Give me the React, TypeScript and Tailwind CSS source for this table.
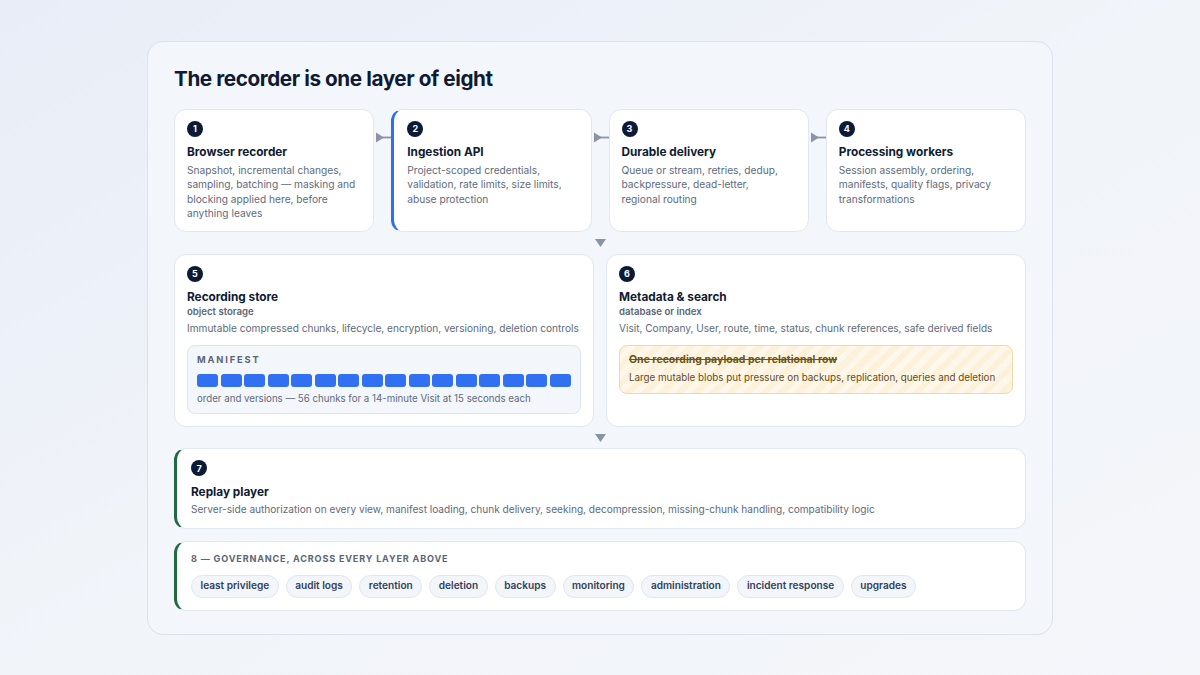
import React from "react";

const FLOW = [
  { n: 1, title: "Browser recorder", body: "Snapshot, incremental changes, sampling, batching — masking and blocking applied here, before anything leaves", accent: false, pr: "pr-[12px]" },
  { n: 2, title: "Ingestion API", body: "Project-scoped credentials, validation, rate limits, size limits, abuse protection", accent: true, pr: "pr-[16px]" },
  { n: 3, title: "Durable delivery", body: "Queue or stream, retries, dedup, backpressure, dead-letter, regional routing", accent: false, pr: "pr-[22px]" },
  { n: 4, title: "Processing workers", body: "Session assembly, ordering, manifests, quality flags, privacy transformations", accent: false, pr: "pr-[16px]" },
];

const CHIPS = [
  "least privilege",
  "audit logs",
  "retention",
  "deletion",
  "backups",
  "monitoring",
  "administration",
  "incident response",
  "upgrades",
];

function Badge({ n }: { n: number }) {
  return (
    <div className="w-4 h-4 rounded-full bg-[#0b1a36] text-white text-[9px] font-bold flex items-center justify-center leading-none">
      {n}
    </div>
  );
}

function RightArrow() {
  return (
    <div className="pt-[23px] flex justify-start pl-[2px]">
      <svg width="15" height="11" viewBox="0 0 15 11">
        <polygon points="0,0.5 8,5.5 0,10.5" fill="#8b94a6" />
        <rect x="6" y="4.6" width="9" height="1.8" fill="#8b94a6" />
      </svg>
    </div>
  );
}

function DownArrow({ h }: { h: string }) {
  return (
    <div className={`${h} flex items-center justify-center`}>
      <svg width="11" height="8" viewBox="0 0 11 8">
        <polygon points="0,0 11,0 5.5,8" fill="#8b94a6" />
      </svg>
    </div>
  );
}

export default function App() {
  return (
    <div
      className="w-[1200px] h-[675px] flex items-center justify-center bg-linear-to-br from-[#e8edf7] via-[#f1f4f9] to-[#f4f6fa]"
      style={{ fontFamily: "Inter, 'Noto Sans', sans-serif" }}
    >
      <div className="w-[906px] rounded-[16px] border border-[#dbe2ec] bg-[#f3f6fb] px-[26px] pt-[23px] pb-[23px]">
        <h1 className="text-[20.7px] leading-[28px] font-bold tracking-[-0.02em] text-[#0f1b33] mb-[16px]">
          The recorder is one layer of eight
        </h1>

        {/* Row 1 — pipeline */}
        <div className="grid grid-cols-[1fr_17px_1fr_17px_1fr_17px_1fr]">
          {FLOW.map((c, i) => (
            <React.Fragment key={c.n}>
              {i > 0 && <RightArrow />}
              <div
                className={`min-w-0 min-h-[123px] rounded-[12px] bg-white border border-[#e1e7f0] pt-[11px] pb-[10px] ${c.pr} ${
                  c.accent ? "border-l-[3px] border-l-[#2f6ef0] pl-[13px]" : "pl-[12px]"
                }`}
              >
                <Badge n={c.n} />
                <div className="mt-[7px] text-[11.8px] leading-[16px] font-bold text-[#0f1b33]">{c.title}</div>
                <p className="mt-[3px] text-[10.2px] leading-[14.5px] text-[#5e6a7d]">{c.body}</p>
              </div>
            </React.Fragment>
          ))}
        </div>

        <DownArrow h="h-[22px]" />

        {/* Row 2 — storage */}
        <div className="grid grid-cols-2 gap-3">
          <div className="rounded-[12px] bg-white border border-[#e1e7f0] px-[12px] pt-[11px] pb-[12px]">
            <Badge n={5} />
            <div className="mt-[7px] text-[11.8px] leading-[16px] font-bold text-[#0f1b33]">Recording store</div>
            <div className="text-[9.6px] leading-[13px] font-semibold text-[#5b6577]">object storage</div>
            <p className="mt-[3px] text-[10.1px] leading-[14.5px] text-[#5e6a7d]">
              Immutable compressed chunks, lifecycle, encryption, versioning, deletion controls
            </p>
            <div className="mt-[10px] rounded-[8px] border border-[#dde4ee] bg-[#f3f6fb] px-[9px] pt-[8px] pb-[8px]">
              <div className="text-[9.3px] leading-[12px] font-bold tracking-[0.2em] text-[#5b6577]">MANIFEST</div>
              <div className="mt-[8px] flex gap-[2.5px]">
                {Array.from({ length: 16 }).map((_, i) => (
                  <div key={i} className="flex-1 h-[13px] rounded-[3px] bg-[#3170f0]" />
                ))}
              </div>
              <div className="mt-[5px] text-[9.7px] leading-[13px] text-[#5e6a7d]">
                order and versions — 56 chunks for a 14-minute Visit at 15 seconds each
              </div>
            </div>
          </div>

          <div className="rounded-[12px] bg-white border border-[#e1e7f0] px-[12px] pt-[11px] pb-[12px]">
            <Badge n={6} />
            <div className="mt-[7px] text-[11.8px] leading-[16px] font-bold text-[#0f1b33]">Metadata &amp; search</div>
            <div className="text-[9.6px] leading-[13px] font-semibold text-[#5b6577]">database or index</div>
            <p className="mt-[3px] text-[10.1px] leading-[14.5px] text-[#5e6a7d]">
              Visit, Company, User, route, time, status, chunk references, safe derived fields
            </p>
            <div className="mt-[10px] rounded-[8px] border border-[#efd9a6] bg-[repeating-linear-gradient(135deg,#fdf1da_0px,#fdf1da_6px,#fff8ea_6px,#fff8ea_12px)] px-[9px] pt-[7px] pb-[8px]">
              <div className="text-[10.5px] leading-[14px] font-bold text-[#6f5514] line-through">
                One recording payload per relational row
              </div>
              <div className="mt-[4px] text-[9.8px] leading-[14px] text-[#5f4c1f]">
                Large mutable blobs put pressure on backups, replication, queries and deletion
              </div>
            </div>
          </div>
        </div>

        <DownArrow h="h-[21px]" />

        {/* Row 3 — replay */}
        <div className="rounded-[12px] bg-white border border-[#e1e7f0] border-l-[3px] border-l-[#1d6b3e] pl-[14px] pr-[12px] pt-[11px] pb-[11px]">
          <Badge n={7} />
          <div className="mt-[8px] text-[11.8px] leading-[16px] font-bold text-[#0f1b33]">Replay player</div>
          <p className="mt-[2px] text-[10.1px] leading-[14.5px] text-[#5e6a7d]">
            Server-side authorization on every view, manifest loading, chunk delivery, seeking, decompression, missing-chunk handling, compatibility logic
          </p>
        </div>

        {/* Row 4 — governance */}
        <div className="mt-3 rounded-[12px] bg-white border border-[#e1e7f0] border-l-[3px] border-l-[#1d6b3e] pl-[14px] pr-[12px] pt-[11px] pb-[12px]">
          <div className="text-[9.1px] leading-[12px] font-bold tracking-[0.09em] text-[#5b6577]">
            8 — GOVERNANCE, ACROSS EVERY LAYER ABOVE
          </div>
          <div className="mt-[10px] flex flex-wrap gap-[7px]">
            {CHIPS.map((c) => (
              <span
                key={c}
                className="rounded-full border border-[#dfe6ef] bg-[#f2f5fa] px-[8.5px] h-[23px] flex items-center text-[10.1px] font-semibold text-[#33405a]"
              >
                {c}
              </span>
            ))}
          </div>
        </div>
      </div>
    </div>
  );
}
